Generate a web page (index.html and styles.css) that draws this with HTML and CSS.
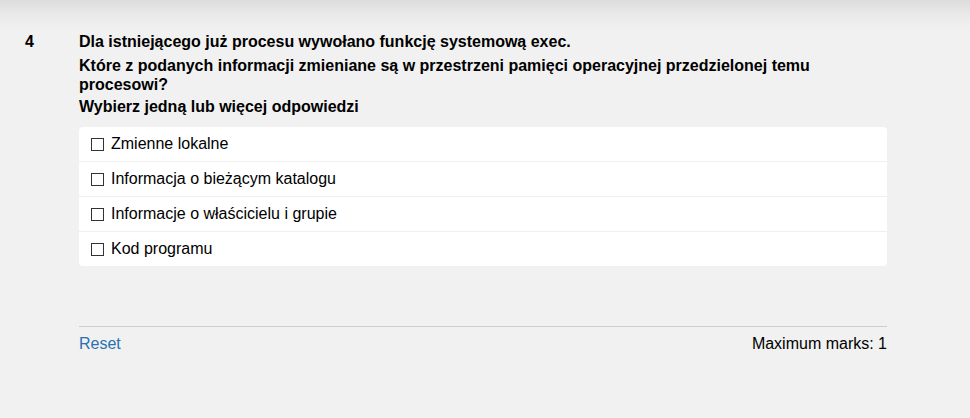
FILE: index.html
```html
<!DOCTYPE html>
<html lang="pl">
<head>
<meta charset="utf-8">
<link rel="stylesheet" href="styles.css">
</head>
<body>
<div class="page">
  <div class="question">
    <div class="num">4</div>
    <div class="content">
      <p class="q q1">Dla istniejącego już procesu wywołano funkcję systemową exec.</p>
      <p class="q q2">Które z podanych informacji zmieniane są w przestrzeni pamięci operacyjnej przedzielonej temu procesowi?</p>
      <p class="q q3">Wybierz jedną lub więcej odpowiedzi</p>
      <div class="options">
        <label class="opt"><span class="box"></span>Zmienne lokalne</label>
        <label class="opt"><span class="box"></span>Informacja o bieżącym katalogu</label>
        <label class="opt"><span class="box"></span>Informacje o właścicielu i grupie</label>
        <label class="opt"><span class="box"></span>Kod programu</label>
      </div>
      <div class="footer">
        <a class="reset" href="#">Reset</a>
        <span class="marks">Maximum marks: 1</span>
      </div>
    </div>
  </div>
</div>
</body>
</html>
```
FILE: styles.css
```css
html, body {
  margin: 0;
  padding: 0;
}
body {
  background: linear-gradient(to bottom, #dcdcdc 0px, #e9e9e9 14px, #f1f1f1 30px, #f1f1f1 100%);
  font-family: "Liberation Sans", Arial, sans-serif;
  font-size: 16px;
  color: #000;
  width: 970px;
  height: 418px;
  overflow: hidden;
}
.page {
  padding-top: 32px;
}
.question {
  display: flex;
}
.num {
  width: 54px;
  padding-left: 25px;
  font-weight: bold;
  line-height: 19px;
}
.content {
  width: 808px;
}
.q {
  margin: 0;
  font-weight: bold;
  line-height: 19px;
}
.q1 { margin-bottom: 5px; }
.q2 { margin-bottom: 3px; }
.options {
  margin-top: 11px;
  background: #fff;
  border-radius: 4px;
}
.opt {
  display: flex;
  align-items: center;
  height: 35px;
  padding-left: 12px;
  border-top: 1px solid #efefef;
  box-sizing: border-box;
}
.opt:first-child {
  border-top: none;
  height: 34px;
}
.box {
  width: 13px;
  height: 13px;
  border: 1px solid #333;
  box-sizing: border-box;
  margin-right: 7px;
}
.footer {
  margin-top: 60px;
  border-top: 1px solid #cdcdcd;
  display: flex;
  justify-content: space-between;
  padding-top: 7px;
  line-height: 19px;
}
.reset {
  color: #2a72b0;
  text-decoration: none;
}
```
